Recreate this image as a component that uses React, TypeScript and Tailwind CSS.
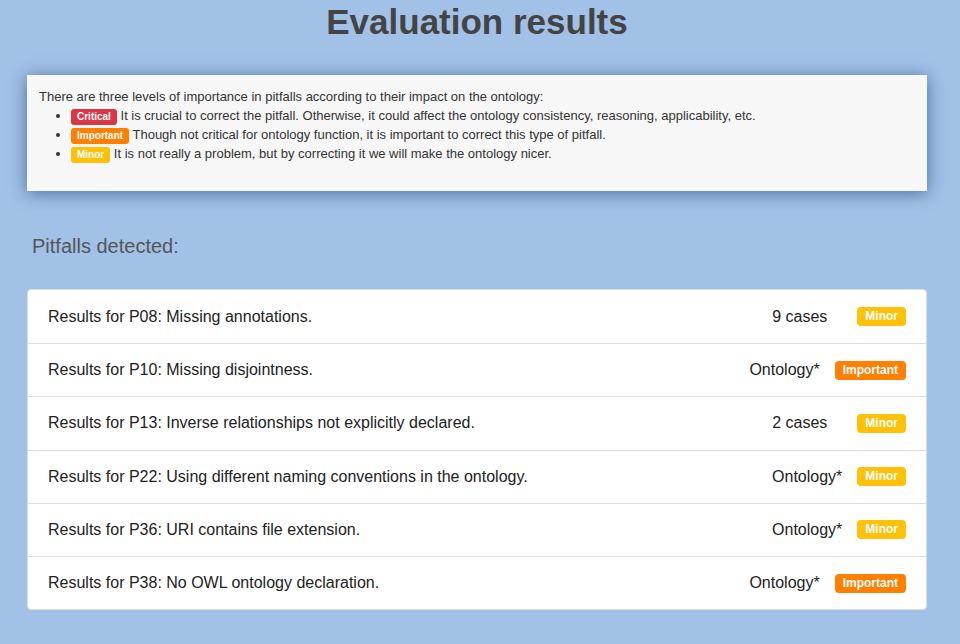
import React from 'react';

type Level = 'Critical' | 'Important' | 'Minor';

const badgeColor: Record<Level, string> = {
  Critical: 'bg-[#dc3545]',
  Important: 'bg-[#ff8000]',
  Minor: 'bg-[#ffc107]',
};

const Badge = ({ level, small }: { level: Level; small?: boolean }) => (
  <span
    className={`${badgeColor[level]} inline-block text-white font-bold ${
      small ? 'text-[10px] leading-[16px] px-[6px] rounded-[3px]' : 'text-[12px] leading-[19px] px-[8px] rounded-[4px]'
    }`}
  >
    {level}
  </span>
);

const pitfalls: { text: string; count: string; level: Level; gap: string }[] = [
  { text: 'Results for P08: Missing annotations.', count: '9 cases', level: 'Minor', gap: 'mr-[30px]' },
  { text: 'Results for P10: Missing disjointness.', count: 'Ontology*', level: 'Important', gap: 'mr-[15px]' },
  { text: 'Results for P13: Inverse relationships not explicitly declared.', count: '2 cases', level: 'Minor', gap: 'mr-[30px]' },
  { text: 'Results for P22: Using different naming conventions in the ontology.', count: 'Ontology*', level: 'Minor', gap: 'mr-[15px]' },
  { text: 'Results for P36: URI contains file extension.', count: 'Ontology*', level: 'Minor', gap: 'mr-[15px]' },
  { text: 'Results for P38: No OWL ontology declaration.', count: 'Ontology*', level: 'Important', gap: 'mr-[15px]' },
];

const App = () => {
  return (
    <div className="min-h-[644px] bg-[#a1c1e7] font-['Liberation_Sans',Arial,sans-serif] text-[#333] pt-[2px] pb-[34px]">
      <h1 className="text-center text-[35px] leading-[40px] font-bold text-[#444] pr-[6px]">
        Evaluation results
      </h1>

      <div className="mx-[27px] mt-[33px] w-[900px] bg-[#f7f7f7] shadow-[0_2px_16px_rgba(20,50,110,0.6)] pt-[13px] pb-[28px] px-[12px] text-[13px]">
        <p className="leading-[18px]">There are three levels of importance in pitfalls according to their impact on the ontology:</p>
        <ul className="list-disc pl-[32px] leading-[19px]">
          <li>
            <Badge level="Critical" small /> It is crucial to correct the pitfall. Otherwise, it could affect the ontology consistency, reasoning, applicability, etc.
          </li>
          <li>
            <Badge level="Important" small /> Though not critical for ontology function, it is important to correct this type of pitfall.
          </li>
          <li>
            <Badge level="Minor" small /> It is not really a problem, but by correcting it we will make the ontology nicer.
          </li>
        </ul>
      </div>

      <h3 className="ml-[32px] mt-[43px] text-[20px] leading-[24px] text-[#555]">Pitfalls detected:</h3>

      <div className="mx-[27px] mt-[31px] w-[900px] bg-white border border-[#dddddd] rounded-[4px]">
        {pitfalls.map((p, i) => (
          <div
            key={i}
            className={`flex items-center h-[53.2px] pl-[20px] pr-[20px] text-[16px] text-[#222] ${
              i > 0 ? 'border-t border-[#dddddd]' : ''
            }`}
          >
            <span className="flex-1">{p.text}</span>
            <span className={p.gap}>{p.count}</span>
            <Badge level={p.level} />
          </div>
        ))}
      </div>
    </div>
  );
};

export default App;
